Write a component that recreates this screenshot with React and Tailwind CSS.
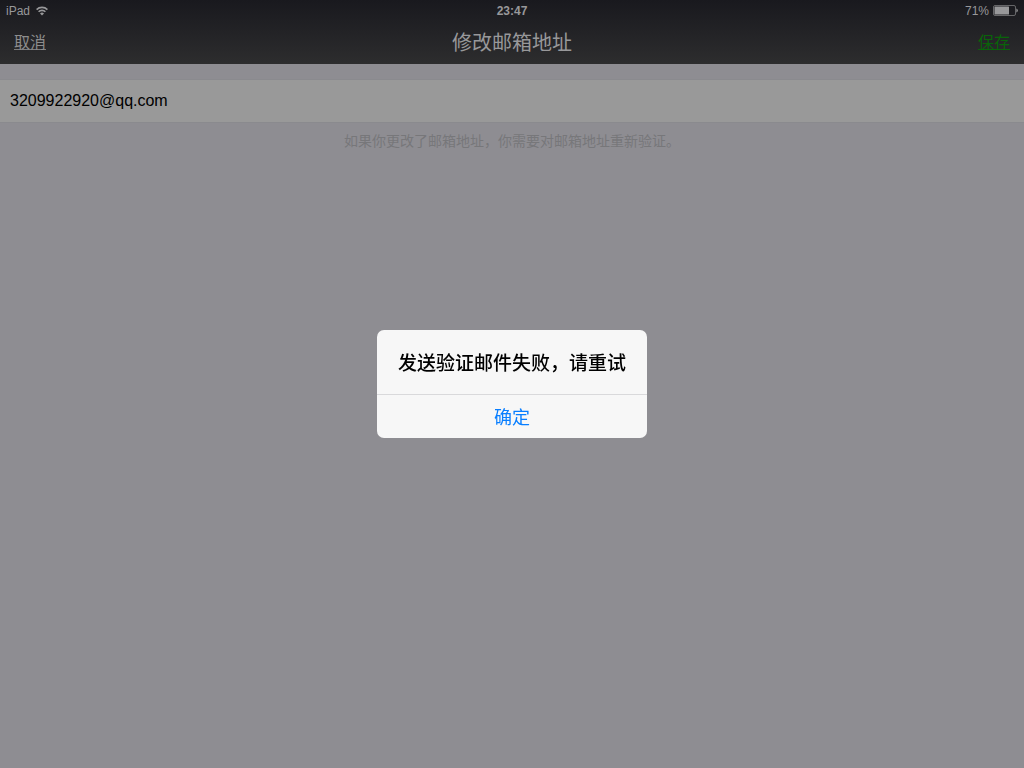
import { useState } from 'react';

const WifiIcon = () => (
  <svg width="12" height="10" viewBox="0 0 12 10" fill="none" stroke="currentColor" strokeWidth="1.6" aria-hidden="true">
    <path d="M0.6 3.6a7.6 7.6 0 0 1 10.8 0" />
    <path d="M2.6 5.8a4.8 4.8 0 0 1 6.8 0" />
    <path d="M6 9.6L4 7.5a2.9 2.9 0 0 1 4 0z" fill="currentColor" stroke="none" />
  </svg>
);

const BatteryIcon = () => (
  <svg width="25" height="11" viewBox="0 0 25 11" aria-hidden="true">
    <rect x="0.5" y="0.5" width="22" height="10" rx="1.5" fill="none" stroke="currentColor" strokeWidth="1" opacity="0.6" />
    <rect x="1.5" y="1.5" width="14.5" height="8" rx="0.5" fill="currentColor" />
    <path d="M23.4 3.6a2 2 0 0 1 0 3.8z" fill="currentColor" />
  </svg>
);

const StatusBar = () => (
  <div className="grid h-5 grid-cols-3 items-center px-1.5 pt-px text-xs text-[#98989a]">
    <div className="flex items-center gap-1.5">
      <span>iPad</span>
      <WifiIcon />
    </div>
    <span className="text-center font-bold">23:47</span>
    <div className="flex items-center justify-end gap-1">
      <span>71%</span>
      <BatteryIcon />
    </div>
  </div>
);

const AlertDialog = ({ message, onClose }) => (
  <div className="fixed inset-0 flex items-center justify-center">
    <div
      role="alertdialog"
      aria-modal="true"
      aria-labelledby="alert-message"
      className="w-[270px] overflow-hidden rounded-[7px] bg-[#f7f7f7] text-center"
    >
      <p id="alert-message" className="px-4 pt-[22px] pb-[18px] text-[19px] leading-6 font-medium text-black">
        {message}
      </p>
      <button
        type="button"
        onClick={onClose}
        className="h-11 w-full border-t border-[#d9d9db] pt-1 text-[18px] text-[#087eff]"
      >
        确定
      </button>
    </div>
  </div>
);

const App = () => {
  const [email, setEmail] = useState('3209922920@qq.com');
  const [alertOpen, setAlertOpen] = useState(true);

  return (
    <div className="min-h-screen bg-[#8e8d92] font-['Liberation_Sans','Noto_Sans_CJK_SC',sans-serif]">
      <header className="bg-linear-to-b from-[#19191e] to-[#2d2d2e]">
        <StatusBar />
        <nav className="grid h-11 grid-cols-3 items-center px-3.5 pt-0.5">
          <a href="#cancel" className="justify-self-start text-base text-[#8d8d8d] underline decoration-[#7c7c7e]">取消</a>
          <h1 className="text-center text-xl text-[#98989a]">修改邮箱地址</h1>
          <a href="#save" className="justify-self-end text-base text-[#096409] underline">保存</a>
        </nav>
      </header>

      <main className="pt-[15px]">
        <input
          type="email"
          aria-label="邮箱地址"
          value={email}
          onChange={(e) => setEmail(e.target.value)}
          className="block h-11 w-full border-y border-[#8a8a8e] bg-[#999999] px-2.5 text-base text-black outline-none"
        />
        <p className="mt-2 text-center text-sm leading-5 text-[#77777a]">
          如果你更改了邮箱地址，你需要对邮箱地址重新验证。
        </p>
      </main>

      {alertOpen && <AlertDialog message="发送验证邮件失败，请重试" onClose={() => setAlertOpen(false)} />}
    </div>
  );
};

export default App;
